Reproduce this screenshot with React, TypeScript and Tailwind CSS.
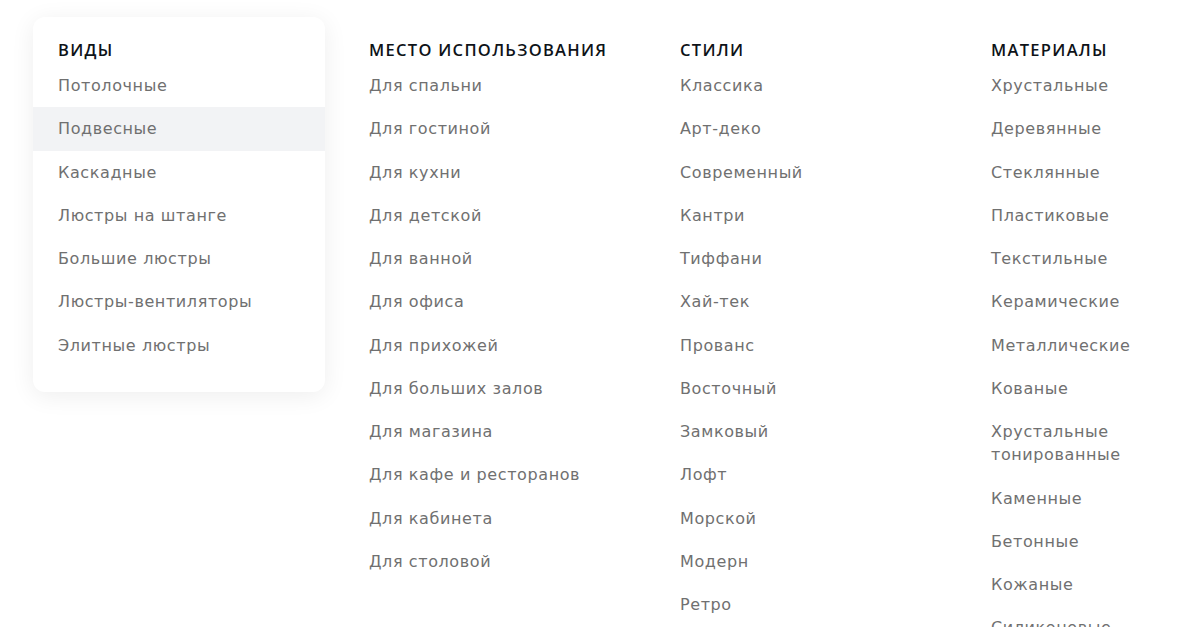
import React from 'react';

type Column = {
  title: string;
  items: React.ReactNode[];
  card?: boolean;
  active?: number;
};

const columns: Column[] = [
  {
    title: 'Виды',
    card: true,
    active: 1,
    items: [
      'Потолочные',
      'Подвесные',
      'Каскадные',
      'Люстры на штанге',
      'Большие люстры',
      'Люстры-вентиляторы',
      'Элитные люстры',
    ],
  },
  {
    title: 'Место использования',
    items: [
      'Для спальни',
      'Для гостиной',
      'Для кухни',
      'Для детской',
      'Для ванной',
      'Для офиса',
      'Для прихожей',
      'Для больших залов',
      'Для магазина',
      'Для кафе и ресторанов',
      'Для кабинета',
      'Для столовой',
    ],
  },
  {
    title: 'Стили',
    items: [
      'Классика',
      'Арт-деко',
      'Современный',
      'Кантри',
      'Тиффани',
      'Хай-тек',
      'Прованс',
      'Восточный',
      'Замковый',
      'Лофт',
      'Морской',
      'Модерн',
      'Ретро',
    ],
  },
  {
    title: 'Материалы',
    items: [
      'Хрустальные',
      'Деревянные',
      'Стеклянные',
      'Пластиковые',
      'Текстильные',
      'Керамические',
      'Металлические',
      'Кованые',
      <>
        Хрустальные
        <br />
        тонированные
      </>,
      'Каменные',
      'Бетонные',
      'Кожаные',
      'Силиконовые',
    ],
  },
];

const MenuColumn: React.FC<{ col: Column }> = ({ col }) => (
  <div
    className={
      col.card
        ? 'self-start rounded-xl bg-white pt-[23px] pb-[25px] shadow-[0_4px_24px_rgba(0,0,0,0.07)]'
        : 'self-start pt-[23px] pb-[25px]'
    }
  >
    <h3 className="px-[25px] pb-[4px] font-['Open_Sans',sans-serif] text-[16.5px] font-semibold uppercase leading-[20px] tracking-[1.3px] text-[#0e1318]">
      {col.title}
    </h3>
    <ul>
      {col.items.map((item, i) => (
        <li
          key={i}
          className={
            i === col.active
              ? 'bg-[#f2f3f5] px-[25px] py-[10px] text-[16px] leading-[23.25px] tracking-[0.6px] text-[#707070]'
              : 'px-[25px] py-[10px] text-[16px] leading-[23.25px] tracking-[0.6px] text-[#707070]'
          }
        >
          {item}
        </li>
      ))}
    </ul>
  </div>
);

export default function App() {
  return (
    <div
      className="min-h-screen bg-white pl-[33px] pt-[17px]"
      style={{ fontFamily: '"DejaVu Sans", "Noto Sans", sans-serif' }}
    >
      <div className="grid grid-cols-[repeat(4,292px)] gap-x-[19px]">
        {columns.map((col) => (
          <MenuColumn key={col.title} col={col} />
        ))}
      </div>
    </div>
  );
}
